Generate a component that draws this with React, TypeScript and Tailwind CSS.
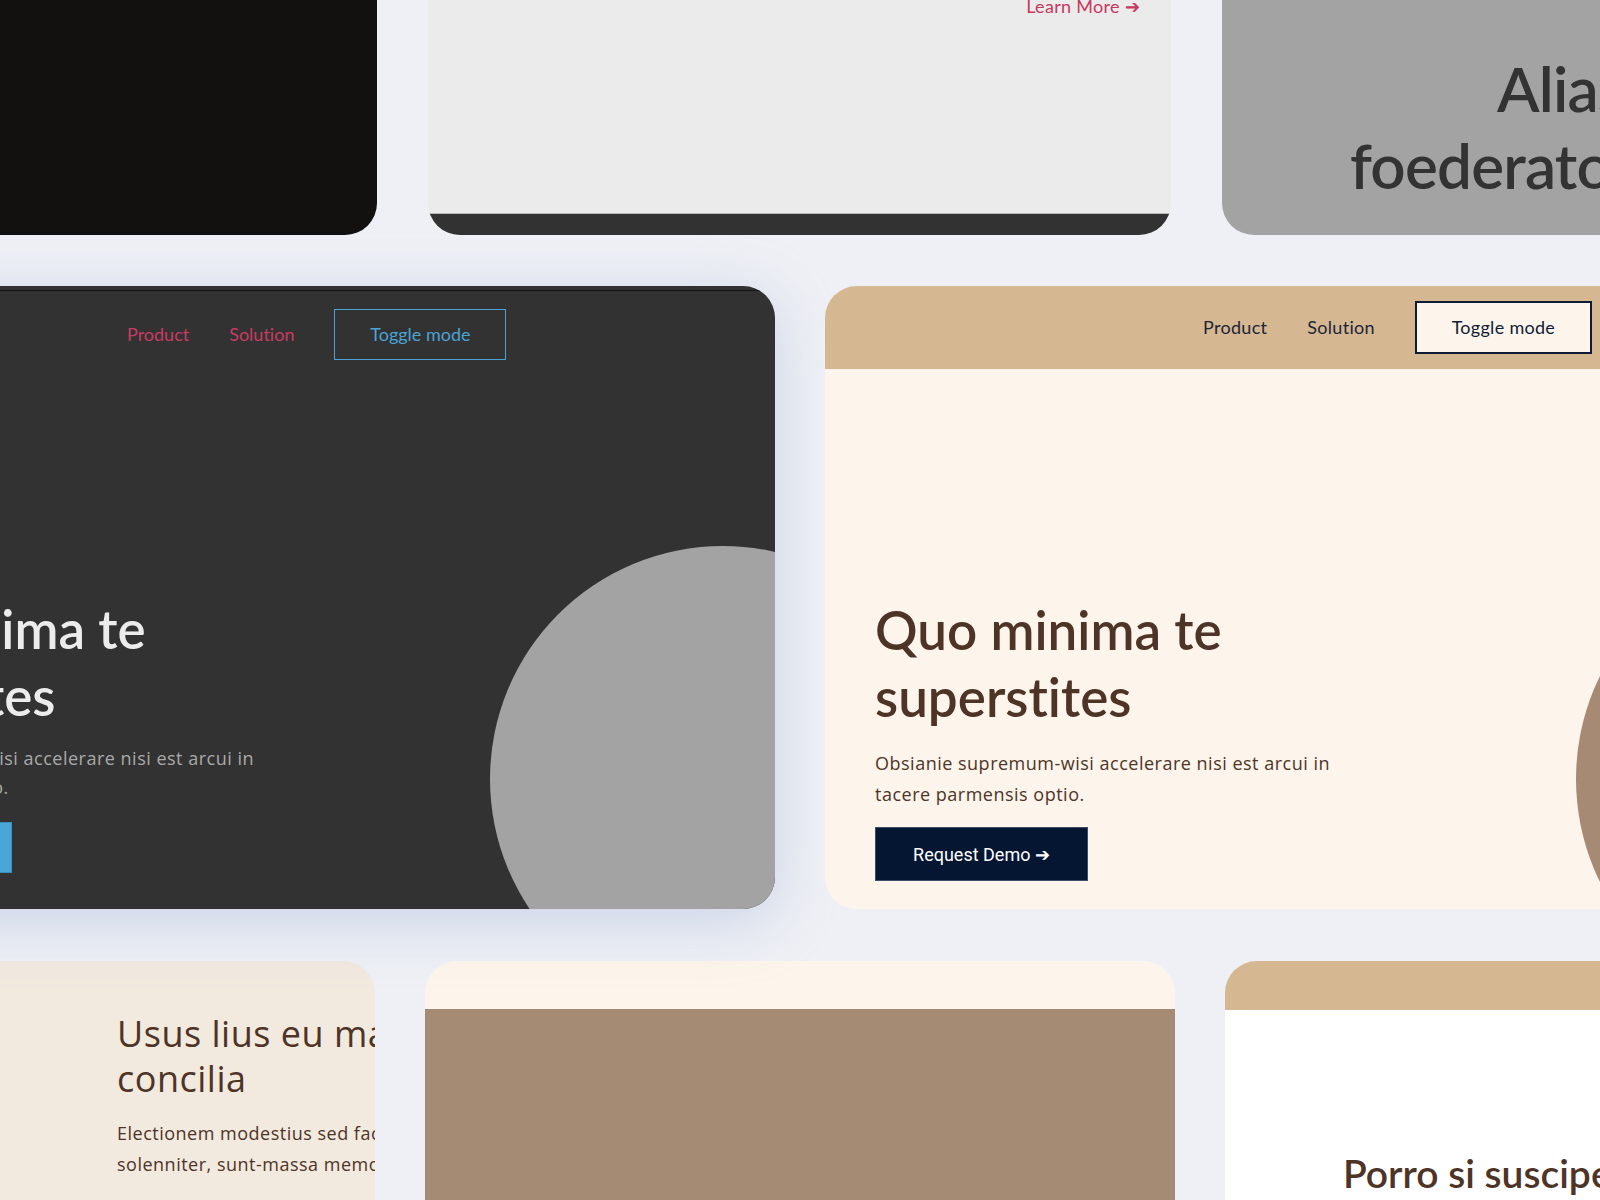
import React from 'react'

const lato = "font-['Lato',sans-serif] [font-variant-ligatures:no-common-ligatures]"
const body = "font-['Open_Sans',sans-serif] tracking-[0.5px]"
const roboto = "font-['Roboto',sans-serif]"

function DarkHero() {
  return (
    <div className="relative w-[1026px] shrink-0 overflow-hidden rounded-[32px] bg-[#323232] shadow-[0_12px_60px_rgba(160,175,215,0.45)] flex flex-col">
      <div className="absolute left-[741px] top-[260px] w-[466px] h-[466px] rounded-full bg-[#a3a3a3]" />
      <div className={`mt-[4px] border-t border-[#131313] h-[88px] shrink-0 flex items-center gap-10 pl-[378px] text-[18px] ${lato}`}>
        <span className="text-[#c83b62]">Product</span>
        <span className="text-[#c83b62]">Solution</span>
        <button className="w-[172px] h-[51px] border border-[#4aa3d4] text-[#4aa3d4]">Toggle mode</button>
      </div>
      <div className="relative flex-1 flex flex-col justify-end pl-[50px] pb-[36px]">
        <h1 className={`text-[53px] leading-[67px] font-semibold text-[#ececec] ${lato}`}>
          Quo minima te
          <br />
          superstites
        </h1>
        <p className={`mt-[15px] text-[18px] leading-[29px] text-[#a9a9a9] ${body}`}>
          Obsianie supremum-wisi accelerare nisi est arcui in
          <br />
          tacere parmensis optio.
        </p>
        <div className="mt-[20px]">
          <button className={`w-[213px] h-[51px] bg-[#4aa6d6] border border-[#3b8fbd] text-white text-[18px] ${roboto}`}>
            Request Demo ➔
          </button>
        </div>
      </div>
    </div>
  )
}

function LightHero() {
  return (
    <div className="relative w-[1026px] shrink-0 overflow-hidden rounded-[32px] bg-[#fdf5eb] flex flex-col">
      <div className="absolute left-[751px] top-[260px] w-[466px] h-[466px] rounded-full bg-[#a68a73]" />
      <div className={`relative h-[83px] shrink-0 bg-[#d5b792] flex items-center gap-10 pl-[378px] text-[18px] tracking-[0.3px] text-[#1c2538] ${lato}`}>
        <span>Product</span>
        <span>Solution</span>
        <button className="w-[177px] h-[53px] border-2 border-[#0f1b33] bg-[#fdf5eb] text-[#0f1b33]">Toggle mode</button>
      </div>
      <div className="relative flex-1 flex flex-col justify-end pl-[50px] pb-[28px]">
        <h1 className={`text-[53px] leading-[67px] font-semibold text-[#4e3426] ${lato}`}>
          Quo minima te
          <br />
          superstites
        </h1>
        <p className={`mt-[18px] text-[18px] leading-[31px] text-[#4e3426] ${body}`}>
          Obsianie supremum-wisi accelerare nisi est arcui in
          <br />
          tacere parmensis optio.
        </p>
        <div className="mt-[17px]">
          <button className={`w-[213px] h-[54px] bg-[#051633] border border-[#3d4d6b] text-white text-[18px] ${roboto}`}>
            Request Demo ➔
          </button>
        </div>
      </div>
    </div>
  )
}

export default function App() {
  return (
    <div className="w-[1600px] h-[1200px] overflow-hidden bg-[#eef0f5] flex flex-col">
      {/* top row, cut off by the window */}
      <div className="flex gap-[51px] h-[235px] shrink-0 ml-[-366px]">
        <div className="w-[743px] shrink-0 rounded-b-[32px] bg-[#121110]" />
        <div className="w-[743px] shrink-0 rounded-b-[32px] overflow-hidden bg-[#ebebeb] flex flex-col">
          <div className="flex-1 flex justify-end pr-[31px]">
            <span className={`mt-[-3px] text-[18px] leading-[18px] tracking-[0.3px] text-[#c7385e] ${lato}`}>Learn More ➔</span>
          </div>
          <div className="h-[22px] shrink-0 border-t border-[#b9b9b9] bg-[#323232]" />
        </div>
        <div className="w-[743px] shrink-0 rounded-bl-[32px] bg-[#a3a3a3] pt-[50px]">
          <h2 className={`text-[62px] leading-[77px] font-semibold tracking-[-0.8px] text-[#333333] whitespace-nowrap ${lato}`}>
            <span className="block pl-[275px]">Alias quae</span>
            <span className="block pl-[128px]">foederatorum</span>
          </h2>
        </div>
      </div>

      {/* middle row */}
      <div className="flex gap-[50px] h-[623px] shrink-0 mt-[51px] ml-[-251px]">
        <DarkHero />
        <LightHero />
      </div>

      {/* bottom row */}
      <div className="flex gap-[50px] h-[300px] shrink-0 mt-[52px] ml-[-375px]">
        <div className="w-[750px] shrink-0 rounded-t-[32px] overflow-hidden bg-[#f2e9df] pl-[492px] pt-[50px]">
          <h2 className={`text-[36px] leading-[45px] text-[#4e3426] whitespace-nowrap ${body}`}>
            Usus lius eu magna
            <br />
            concilia
          </h2>
          <p className={`mt-[17px] text-[18px] leading-[31px] text-[#4e3426] whitespace-nowrap ${body}`}>
            Electionem modestius sed facere
            <br />
            solenniter, sunt-massa memorare.
          </p>
        </div>
        <div className="w-[750px] shrink-0 rounded-t-[32px] overflow-hidden flex flex-col">
          <div className="h-[48px] shrink-0 bg-[#fdf5eb]" />
          <div className="flex-1 bg-[#a68b74]" />
        </div>
        <div className="w-[750px] shrink-0 rounded-t-[32px] overflow-hidden flex flex-col">
          <div className="h-[49px] shrink-0 bg-[#d5b792]" />
          <div className="flex-1 bg-white pt-[139px] pl-[118px]">
            <h2 className={`text-[39px] leading-[48px] font-semibold text-[#4e3426] whitespace-nowrap ${lato}`}>
              Porro si suscipere
            </h2>
          </div>
        </div>
      </div>
    </div>
  )
}
